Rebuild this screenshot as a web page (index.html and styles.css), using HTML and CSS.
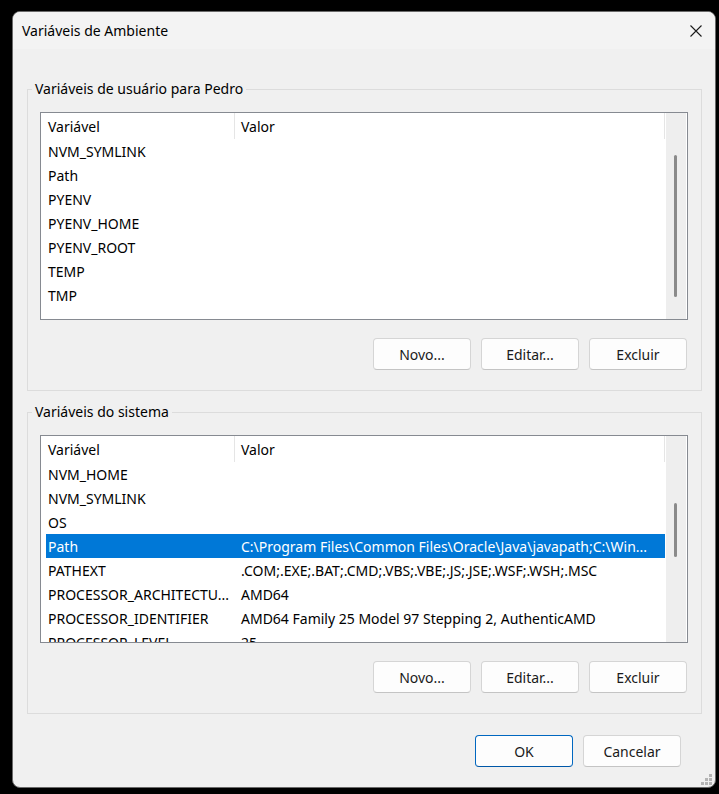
FILE: index.html
```html
<!DOCTYPE html>
<html lang="pt-BR">
<head>
<meta charset="utf-8">
<title>Variáveis de Ambiente</title>
<link rel="stylesheet" href="styles.css">
</head>
<body>
<div class="window">
  <div class="titlebar">
    <span class="title">Variáveis de Ambiente</span>
    <span class="close" aria-label="Fechar">
      <svg width="12" height="12" viewBox="0 0 12 12"><path d="M0.5 0.5 L11.5 11.5 M11.5 0.5 L0.5 11.5" stroke="#1b1b1b" stroke-width="1.1" fill="none"/></svg>
    </span>
  </div>
  <div class="content">
    <fieldset class="group group-user">
      <legend>Variáveis de usuário para Pedro</legend>
      <div class="list">
        <div class="list-main">
          <div class="header">
            <div class="hcell c1">Variável</div>
            <div class="hcell c2">Valor</div>
          </div>
          <div class="row"><span class="c1">NVM_SYMLINK</span><span class="c2"></span></div>
          <div class="row"><span class="c1">Path</span><span class="c2"></span></div>
          <div class="row"><span class="c1">PYENV</span><span class="c2"></span></div>
          <div class="row"><span class="c1">PYENV_HOME</span><span class="c2"></span></div>
          <div class="row"><span class="c1">PYENV_ROOT</span><span class="c2"></span></div>
          <div class="row"><span class="c1">TEMP</span><span class="c2"></span></div>
          <div class="row"><span class="c1">TMP</span><span class="c2"></span></div>
        </div>
        <div class="scrollbar"><div class="thumb thumb-user"></div></div>
      </div>
      <div class="buttons">
        <button class="btn">Novo...</button>
        <button class="btn">Editar...</button>
        <button class="btn">Excluir</button>
      </div>
    </fieldset>

    <fieldset class="group group-sys">
      <legend>Variáveis do sistema</legend>
      <div class="list">
        <div class="list-main">
          <div class="header">
            <div class="hcell c1">Variável</div>
            <div class="hcell c2">Valor</div>
          </div>
          <div class="row"><span class="c1">NVM_HOME</span><span class="c2"></span></div>
          <div class="row"><span class="c1">NVM_SYMLINK</span><span class="c2"></span></div>
          <div class="row"><span class="c1">OS</span><span class="c2"></span></div>
          <div class="row selected"><span class="c1">Path</span><span class="c2">C:\Program Files\Common Files\Oracle\Java\javapath;C:\Win...</span></div>
          <div class="row"><span class="c1">PATHEXT</span><span class="c2">.COM;.EXE;.BAT;.CMD;.VBS;.VBE;.JS;.JSE;.WSF;.WSH;.MSC</span></div>
          <div class="row"><span class="c1">PROCESSOR_ARCHITECTU...</span><span class="c2">AMD64</span></div>
          <div class="row"><span class="c1">PROCESSOR_IDENTIFIER</span><span class="c2">AMD64 Family 25 Model 97 Stepping 2, AuthenticAMD</span></div>
          <div class="row"><span class="c1">PROCESSOR_LEVEL</span><span class="c2">25</span></div>
        </div>
        <div class="scrollbar"><div class="thumb thumb-sys"></div></div>
      </div>
      <div class="buttons">
        <button class="btn">Novo...</button>
        <button class="btn">Editar...</button>
        <button class="btn">Excluir</button>
      </div>
    </fieldset>

    <div class="dialog-buttons">
      <button class="btn btn-default">OK</button>
      <button class="btn">Cancelar</button>
    </div>
  </div>
  <svg class="grip" width="12" height="12" viewBox="0 0 12 12">
    <rect x="8" y="0" width="3" height="3" fill="#b4b4b4"/>
    <rect x="4" y="4" width="3" height="3" fill="#b4b4b4"/>
    <rect x="8" y="4" width="3" height="3" fill="#b4b4b4"/>
    <rect x="0" y="8" width="3" height="3" fill="#b4b4b4"/>
    <rect x="4" y="8" width="3" height="3" fill="#b4b4b4"/>
    <rect x="8" y="8" width="3" height="3" fill="#b4b4b4"/>
  </svg>
</div>
</body>
</html>
```
FILE: styles.css
```css
* { box-sizing: border-box; }
html, body { margin: 0; padding: 0; }
body {
  background: #000;
  font-family: "Noto Sans", "Open Sans", sans-serif;
  font-size: 14px;
  color: #000;
}
.window {
  position: relative;
  margin: 11px 0 0 12px;
  width: 704px;
  height: 777px;
  border: 1px solid #6a6a6a;
  border-radius: 8px;
  background: #f0f0f0;
  overflow: hidden;
}
.titlebar {
  height: 37px;
  background: #f3f3f3;
  display: flex;
  align-items: center;
  justify-content: space-between;
  padding: 0 13px 0 9px;
}
.title { font-size: 14px; }
.close { display: flex; width: 12px; height: 12px; margin-top: 1px; }
.content { display: flex; flex-direction: column; }
.group {
  margin: 0 0 0 14px;
  padding: 0;
  width: 675px;
  border: 1px solid #dcdcdc;
  min-width: 0;
}
.group-user { margin-top: 30px; }
.group-sys { margin-top: 11px; }
.group legend {
  padding: 0 3px;
  margin-left: 4px;
  line-height: 20px;
  height: 20px;
}
.list {
  margin: 13px 0 0 12px;
  width: 648px;
  height: 208px;
  border: 1px solid #868a91;
  background: #fff;
  display: flex;
  overflow: hidden;
}
.list-main { width: 625px; overflow: hidden; }
.header { display: flex; height: 26px; }
.hcell {
  padding-top: 2px;
  line-height: 24px;
  box-shadow: inset -1px 0 0 #e5e5e5;
  white-space: nowrap;
}
.header .c1 { width: 194px; padding-left: 7px; }
.header .c2 { width: 430px; padding-left: 6px; }
.row {
  display: flex;
  height: 24px;
  padding-top: 2px;
  line-height: 22px;
  margin-left: 5px;
  width: 619px;
  white-space: nowrap;
}
.row .c1 { width: 189px; padding-left: 2px; overflow: hidden; }
.row .c2 { flex: 1; padding-left: 6px; overflow: hidden; }
.row.selected { background: #0078d7; color: #fff; }
.scrollbar { width: 20px; background: #eeeeee; }
.thumb { width: 3px; margin-left: 8px; background: #8a8a8a; border-radius: 2px; }
.thumb-user { margin-top: 42px; height: 142px; }
.thumb-sys { margin-top: 67px; height: 54px; }
.buttons {
  display: flex;
  justify-content: flex-end;
  gap: 10px;
  margin: 18px 14px 20px 0;
}
.btn {
  font-family: inherit;
  font-size: 14px;
  color: #1a1a1a;
  width: 98px;
  height: 32px;
  padding: 0;
  background: #fdfdfd;
  border: 1px solid #d5d5d5;
  border-bottom-color: #c4c4c4;
  border-radius: 4px;
}
.btn-default { border: 1px solid #0067c0; border-bottom-color: #0058a8; }
.dialog-buttons {
  display: flex;
  justify-content: flex-end;
  gap: 10px;
  margin: 21px 34px 0 0;
}
.grip { position: absolute; right: 2px; bottom: 1px; }
```
